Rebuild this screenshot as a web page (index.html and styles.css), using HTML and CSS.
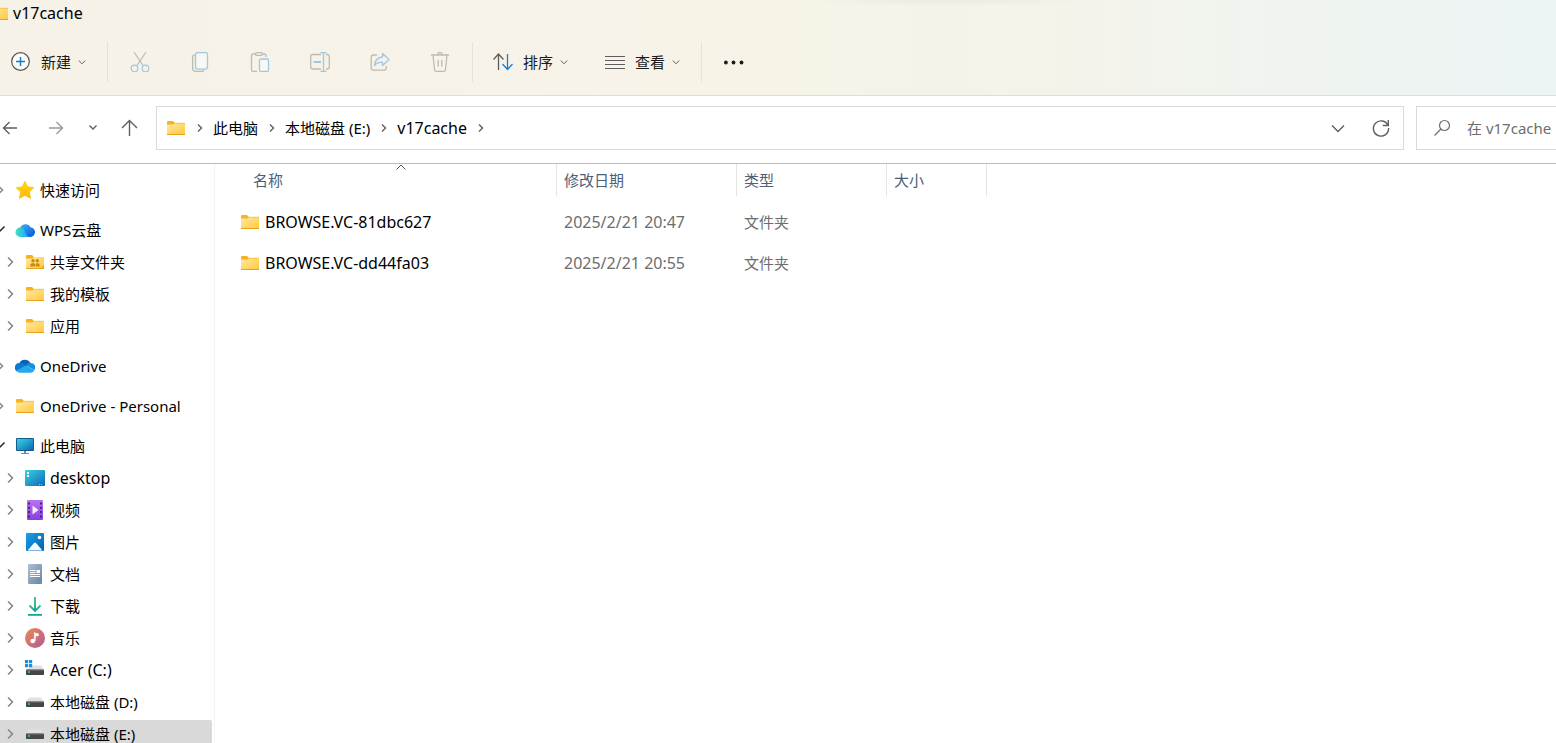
FILE: index.html
```html
<!DOCTYPE html>
<html lang="zh-CN">

<head>
    <meta charset="UTF-8">
    <meta name="viewport" content="width=device-width, initial-scale=1.0">
    <title>v17cache</title>
    <link rel="stylesheet" href="styles.css">
</head>

<body>
    <!-- Icon sprite -->
    <svg class="sprite" width="0" height="0" aria-hidden="true">
        <defs>
            <linearGradient id="g-folder" x1="0" y1="0" x2="1" y2="1">
                <stop offset="0" stop-color="#ffeaa6" />
                <stop offset="1" stop-color="#ffc93c" />
            </linearGradient>
            <linearGradient id="g-star" x1="0" y1="0" x2="0" y2="1">
                <stop offset="0" stop-color="#ffd800" />
                <stop offset="1" stop-color="#ffb812" />
            </linearGradient>
            <linearGradient id="g-wps-a" x1="0" y1="0" x2="1" y2="1">
                <stop offset="0" stop-color="#3ab8fb" />
                <stop offset="1" stop-color="#0a4fd8" />
            </linearGradient>
            <linearGradient id="g-wps-b" x1="0" y1="0" x2="1" y2="0">
                <stop offset="0" stop-color="#41e3c0" />
                <stop offset="1" stop-color="#14a6f6" />
            </linearGradient>
            <linearGradient id="g-screen" x1="0" y1="0" x2="1" y2="1">
                <stop offset="0" stop-color="#37d5dd" />
                <stop offset="1" stop-color="#0c67b8" />
            </linearGradient>
            <linearGradient id="g-video" x1="0" y1="0" x2="0" y2="1">
                <stop offset="0" stop-color="#b673f2" />
                <stop offset="1" stop-color="#8a3fdc" />
            </linearGradient>
            <linearGradient id="g-picture" x1="0" y1="0" x2="1" y2="1">
                <stop offset="0" stop-color="#1aa0e8" />
                <stop offset="1" stop-color="#0560b0" />
            </linearGradient>
            <linearGradient id="g-doc" x1="0" y1="0" x2="1" y2="1">
                <stop offset="0" stop-color="#adc0d4" />
                <stop offset="1" stop-color="#6784a3" />
            </linearGradient>
            <linearGradient id="g-download" x1="0" y1="0" x2="0" y2="1">
                <stop offset="0" stop-color="#2cc285" />
                <stop offset="1" stop-color="#0f9f9b" />
            </linearGradient>
            <linearGradient id="g-music" x1="0" y1="0" x2="1" y2="1">
                <stop offset="0" stop-color="#f08a4c" />
                <stop offset="1" stop-color="#b0589f" />
            </linearGradient>
        </defs>

        <symbol id="i-folder" viewBox="0 0 20 20">
            <path d="M1 4a1 1 0 0 1 1-1h5l2 2v4H1z" fill="#f9b21b" />
            <path d="M1 6.500h6.500L9 5h10v11.500H1z" fill="url(#g-folder)" />
            <path d="M1 16.500h18" stroke="#e9a41c" />
            <path d="M9 5.300h10" stroke="#f5bd35" stroke-width=".8" />
        </symbol>
        <symbol id="i-shared" viewBox="0 0 20 20">
            <path d="M1 4a1 1 0 0 1 1-1h5l2 2v4H1z" fill="#f9b21b" />
            <path d="M1 6.500h6.500L9 5h10v11.500H1z" fill="url(#g-folder)" />
            <path d="M1 16.500h18" stroke="#e9a41c" />
            <path d="M19 13v4h-4z" fill="#e9a41c" />
            <g fill="#c98a14">
                <circle cx="8" cy="8.700" r="1.700" />
                <circle cx="12.300" cy="8.700" r="1.700" />
                <path d="M5.300 14.500v-1.500q0-1.800 1.800-1.800h1.800q1.300 0 1.300 1.300v2z" />
                <path d="M10.800 14.500v-2q0-1.300 1.300-1.300h.8q1.800 0 1.800 1.800v1.500z" />
            </g>
        </symbol>
        <symbol id="i-star" viewBox="0 0 20 20">
            <path d="M10 1.300l2.700 5.600 6.100.8-4.500 4.300 1.200 6.200L10 15.200l-5.500 3 1.200-6.200-4.500-4.300 6.100-.8z" fill="url(#g-star)" stroke="url(#g-star)" stroke-width="1" stroke-linejoin="round" />
        </symbol>
        <symbol id="i-wps" viewBox="0 0 20 20">
            <path d="M5 8.500a5.600 5.600 0 0 1 10.500-1.200 4.800 4.800 0 0 1-.7 9.700H9z" fill="url(#g-wps-a)" />
            <path d="M5.200 7.500a4.700 4.700 0 0 1 4.300 3.200c1 2.600 1.700 4.800 4.500 6.300H5.200a4.700 4.700 0 0 1 0-9.500z" fill="url(#g-wps-b)" />
        </symbol>
        <symbol id="i-onedrive" viewBox="0 0 20 20">
            <path d="M4 8a6.200 6.200 0 0 1 11.500-.7L10 12z" fill="#0364b8" />
            <path d="M4.800 7Q8 6.500 10.500 9L14 12 2 15.500A4.600 4.600 0 0 1 4.800 7z" fill="#0f78d4" />
            <path d="M10.800 9.500q1.800-2.800 4.800-2.400A4.400 4.400 0 0 1 19.500 14z" fill="#1490df" />
            <path d="M1.500 14.500l9.300-5 8.700 4.500q-.9 2.700-3.800 2.700H5q-2.200 0-3.500-2.200z" fill="#28a8ea" />
        </symbol>
        <symbol id="i-pc" viewBox="0 0 20 20">
            <rect x="1" y="2" width="18" height="13" rx="1" fill="#155a8c" />
            <rect x="2" y="3" width="16" height="11" fill="url(#g-screen)" />
            <path d="M9 15h2v2h3v1H6v-1h3z" fill="#7b8894" />
        </symbol>
        <symbol id="i-desktop" viewBox="0 0 20 20">
            <rect y="2" width="20" height="16" rx="1" fill="url(#g-screen)" />
            <path d="M2 4h2v2H2zM2 7h2v2H2z" fill="#fff" />
            <path d="M14 16.500h4" stroke="#8ecbef" stroke-dasharray="1 1" />
        </symbol>
        <symbol id="i-video" viewBox="0 0 20 20">
            <rect x="2" width="16" height="20" rx="1" fill="url(#g-video)" />
            <path d="M4 2.500v16M16 2.500v16" stroke="#4c2385" stroke-width="2" stroke-dasharray="2 2.300" />
            <path d="M7.500 5.500v9l6-4.500z" fill="#f4ecfc" />
        </symbol>
        <symbol id="i-picture" viewBox="0 0 20 20">
            <rect x="1" y="1" width="18" height="18" rx="1" fill="url(#g-picture)" />
            <path d="M2.500 18.500l6.500-7.500q1-1 2 0l6.500 7.500z" fill="#f4fafd" />
            <circle cx="14.500" cy="5.500" r="1.800" fill="#fff" />
        </symbol>
        <symbol id="i-doc" viewBox="0 0 20 20">
            <rect x="3" width="14" height="20" rx="1" fill="url(#g-doc)" />
            <path d="M5 6.500h5.500M5 8.500h5.500M5 10.500h10M5 12.500h10" stroke="#fff" />
            <path d="M11.500 6h3.500v3h-3.500z" fill="#fff" />
        </symbol>
        <symbol id="i-download" viewBox="0 0 20 20">
            <path d="M4.500 9.500l5.500 5.500 5.500-5.500" fill="none" stroke="url(#g-download)" stroke-width="1.800" />
            <path d="M9.100 1h1.800v13H9.100z" fill="url(#g-download)" />
            <path d="M3 18h14v1.800H3z" fill="#14aa90" />
        </symbol>
        <symbol id="i-music" viewBox="0 0 20 20">
            <circle cx="10" cy="10" r="10" fill="url(#g-music)" />
            <ellipse cx="7.700" cy="13" rx="2.400" ry="2.200" fill="#fff" />
            <path d="M9.300 13V4.500q1.800 1.200 4 1.200v2.300q-1.500 0-2.600-.6l-.6 5.600z" fill="#fff" stroke="#fff" stroke-width=".6" />
        </symbol>
        <symbol id="i-drive" viewBox="0 0 20 20">
            <path d="M4 5.500h12l3 4.500H1z" fill="#dfe1e5" />
            <rect x="1" y="9.500" width="18" height="5.500" rx=".8" fill="#464646" />
            <path d="M1.500 10.200h17" stroke="#6a6a6a" />
            <circle cx="4" cy="12" r=".9" fill="#4be35e" />
        </symbol>
        <symbol id="i-drive-win" viewBox="0 0 20 20">
            <path d="M8 5.500h8l3 4H1z" fill="#dfe1e5" />
            <rect x="1" y="9.500" width="18" height="5.500" rx=".8" fill="#464646" />
            <path d="M1.500 10.200h17" stroke="#6a6a6a" />
            <circle cx="4" cy="12" r=".9" fill="#4be35e" />
            <path d="M0 0h3.200v3.200H0zM4 0h3.200v3.200H4zM0 4h3.200v3.200H0zM4 4h3.200v3.200H4z" fill="#1a8fe0" />
        </symbol>

        <symbol id="i-right" viewBox="0 0 20 20">
            <path d="M8 5.500l4.500 4.500L8 14.500" fill="none" stroke="currentColor" stroke-width="1.500" />
        </symbol>
        <symbol id="i-crumb" viewBox="0 0 20 20">
            <path d="M8.500 6.500L12 10l-3.500 3.500" fill="none" stroke="currentColor" stroke-width="1.500" />
        </symbol>
        <symbol id="i-open" viewBox="0 0 20 20">
            <path d="M5.500 9.500l3 3 6-6" fill="none" stroke="currentColor" stroke-width="1.500" />
        </symbol>
        <symbol id="i-down" viewBox="0 0 8 8">
            <path d="M.7 2.500L4 5.800l3.300-3.300" fill="none" stroke="currentColor" />
        </symbol>
    </svg>

    <header class="top">
        <div class="title-bar">
            <svg class="icon title-icon"><use href="#i-folder" /></svg>
            <span class="latin">v17cache</span>
        </div>

        <div class="toolbar">
            <button class="tool tool-new">
                <svg class="icon" viewBox="0 0 20 20" fill="none">
                    <circle cx="9.500" cy="9.500" r="8.800" fill="#fbfbf8" stroke="#555" stroke-width="1.200" />
                    <path d="M9.500 5v9M5 9.500h9" stroke="#1079d0" stroke-width="1.400" />
                </svg>
                新建
                <svg class="arrow"><use href="#i-down" /></svg>
            </button>
            <span class="sep"></span>

            <button class="tool-icon" aria-label="剪切">
                <svg class="icon" viewBox="0 0 20 20" fill="none" stroke-width="1.200">
                    <path d="M4 0l9 13.500M16 0L7 13.500" stroke="#bfbbb0" />
                    <circle cx="4.500" cy="16.500" r="3.300" stroke="#9cc8e6" />
                    <circle cx="15.500" cy="16.500" r="3.300" stroke="#9cc8e6" />
                </svg>
            </button>
            <button class="tool-icon" aria-label="复制">
                <svg class="icon" viewBox="0 0 20 20" fill="none" stroke-width="1.300">
                    <path d="M4.500 3Q2.600 3.300 2.600 5v11q0 3.400 3.400 3.400h5.500q2 0 2.500-1.400" stroke="#bfbbb0" />
                    <rect x="5.500" y=".6" width="12" height="16.500" rx="2" fill="#f9f7f1" stroke="#9cc8e6" />
                </svg>
            </button>
            <button class="tool-icon" aria-label="粘贴">
                <svg class="icon" viewBox="0 0 20 20" fill="none" stroke-width="1.300">
                    <path d="M5.500 2H3Q1.500 2 1.500 3.500V18q0 1.400 1.500 1.400h4M12.500 2h2Q16 2 16 3.500V5" stroke="#bfbbb0" />
                    <rect x="5.500" y=".6" width="7" height="2.800" rx="1.400" stroke="#bfbbb0" />
                    <rect x="9.500" y="7" width="9" height="12.400" rx="1.500" fill="#f9f7f1" stroke="#9cc8e6" />
                </svg>
            </button>
            <button class="tool-icon" aria-label="重命名">
                <svg class="icon" viewBox="0 0 20 20" fill="none" stroke-width="1.300">
                    <path d="M11 2.500H3Q.7 2.500.7 4.800v10Q.7 17 3 17h8M16 2.500h1q2.300 0 2.300 2.300v10Q19.300 17 17 17h-1" stroke="#bfbbb0" />
                    <path d="M10.500.6h6M13.500.6v18.800M10.500 19.400h6" stroke="#9cc8e6" />
                    <path d="M3.500 10h7.500" stroke="#9cc8e6" stroke-width="2" />
                </svg>
            </button>
            <button class="tool-icon" aria-label="共享">
                <svg class="icon" viewBox="0 0 20 20" fill="none" stroke-width="1.300" stroke-linejoin="round">
                    <path d="M7 3H3.500Q1.200 3 1.200 5.300v10.500q0 2.300 2.300 2.300H14q2.300 0 2.300-2.300V14" stroke="#bfbbb0" />
                    <path d="M12.500 1.500L19 7.500l-6.500 6v-3.300Q7.500 10 4.500 13.500 5.500 5.500 12.500 5z" stroke="#9cc8e6" />
                </svg>
            </button>
            <button class="tool-icon" aria-label="删除">
                <svg class="icon" viewBox="0 0 20 20" fill="none" stroke="#bfbbb0" stroke-width="1.300">
                    <path d="M1 3h18M3 3l1.500 14.500q.2 1.900 2 1.900h7q1.800 0 2-1.900L17 3M7.500 3Q7.500.6 10 .6T12.500 3M8.200 8v6.500M11.800 8v6.500" />
                </svg>
            </button>
            <span class="sep"></span>

            <button class="tool">
                <svg class="icon" viewBox="0 0 20 20" fill="none" stroke-width="1.300">
                    <path d="M5.500 18V2.500M.5 7.500l5-5.500 5 5.500" stroke="#5c5c5c" />
                    <path d="M14.500 2v15.500M9.500 12l5 5.500 5-5.500" stroke="#1580d6" />
                </svg>
                排序
                <svg class="arrow"><use href="#i-down" /></svg>
            </button>
            <button class="tool">
                <svg class="icon" viewBox="0 0 20 20" fill="none" stroke="#5c5c5c" stroke-width="1.200">
                    <path d="M0 4.500h20M0 8.500h20M0 12.500h20M0 16.500h20" />
                </svg>
                查看
                <svg class="arrow"><use href="#i-down" /></svg>
            </button>
            <span class="sep"></span>

            <button class="tool-icon" aria-label="查看更多">
                <svg class="icon" viewBox="0 0 20 20" fill="#1b1b1b">
                    <circle cx="1.900" cy="10.500" r="1.900" />
                    <circle cx="9.500" cy="10.500" r="1.900" />
                    <circle cx="17.500" cy="10.500" r="1.900" />
                </svg>
            </button>
        </div>
    </header>

    <div class="nav-bar">
        <button class="nav-btn nav-back" aria-label="后退">
            <svg class="icon" viewBox="0 0 20 20"><path d="M17 10H3.500M9.500 4L3.500 10l6 6" /></svg>
        </button>
        <button class="nav-btn nav-forward" aria-label="前进">
            <svg class="icon" viewBox="0 0 20 20"><path d="M3 10h13.500M10.500 4l6 6-6 6" /></svg>
        </button>
        <button class="nav-btn nav-recent" aria-label="最近位置">
            <svg class="icon" viewBox="0 0 20 20"><path d="M6.500 7.500L10 11l3.500-3.500" /></svg>
        </button>
        <button class="nav-btn" aria-label="上移">
            <svg class="icon" viewBox="0 0 20 20"><path d="M10.500 18V3M3 10l7.500-7.500L18 10" /></svg>
        </button>

        <nav class="address">
            <svg class="icon"><use href="#i-folder" /></svg>
            <svg class="crumb-arrow"><use href="#i-crumb" /></svg>
            <a href="#">此电脑</a>
            <svg class="crumb-arrow"><use href="#i-crumb" /></svg>
            <a href="#">本地磁盘 (E:)</a>
            <svg class="crumb-arrow"><use href="#i-crumb" /></svg>
            <a class="latin" href="#">v17cache</a>
            <svg class="crumb-arrow"><use href="#i-crumb" /></svg>
            <span class="grow"></span>
            <button class="address-btn" aria-label="历史记录">
                <svg class="icon" viewBox="0 0 20 20"><path d="M4 7.500l6 6 6-6" /></svg>
            </button>
            <button class="address-btn" aria-label="刷新">
                <svg class="icon" viewBox="0 0 20 20"><path d="M17 7.500A7.600 7.600 0 1 0 17.600 10M17.300 2v5.500h-5.500" /></svg>
            </button>
        </nav>

        <label class="search">
            <svg class="icon" viewBox="0 0 20 20" fill="none" stroke="#707070" stroke-width="1.200">
                <circle cx="12.500" cy="7.500" r="5" />
                <path d="M9 11l-6.500 6.500" />
            </svg>
            <input type="text" placeholder="在 v17cache" aria-label="搜索">
        </label>
    </div>

    <main class="content">
        <aside class="sidebar">
            <ul class="tree">
                <li><a class="node" href="#"><svg class="icon"><use href="#i-right" /></svg><svg class="icon"><use href="#i-star" /></svg>快速访问</a></li>
                <li>
                    <a class="node open" href="#"><svg class="icon"><use href="#i-open" /></svg><svg class="icon"><use href="#i-wps" /></svg>WPS云盘</a>
                    <ul>
                        <li><a class="node" href="#"><svg class="icon"><use href="#i-right" /></svg><svg class="icon"><use href="#i-shared" /></svg>共享文件夹</a></li>
                        <li><a class="node" href="#"><svg class="icon"><use href="#i-right" /></svg><svg class="icon"><use href="#i-folder" /></svg>我的模板</a></li>
                        <li><a class="node" href="#"><svg class="icon"><use href="#i-right" /></svg><svg class="icon"><use href="#i-folder" /></svg>应用</a></li>
                    </ul>
                </li>
                <li><a class="node" href="#"><svg class="icon"><use href="#i-right" /></svg><svg class="icon"><use href="#i-onedrive" /></svg>OneDrive</a></li>
                <li><a class="node" href="#"><svg class="icon"><use href="#i-right" /></svg><svg class="icon"><use href="#i-folder" /></svg>OneDrive - Personal</a></li>
                <li>
                    <a class="node open" href="#"><svg class="icon"><use href="#i-open" /></svg><svg class="icon"><use href="#i-pc" /></svg>此电脑</a>
                    <ul>
                        <li><a class="node latin" href="#"><svg class="icon"><use href="#i-right" /></svg><svg class="icon"><use href="#i-desktop" /></svg>desktop</a></li>
                        <li><a class="node" href="#"><svg class="icon"><use href="#i-right" /></svg><svg class="icon"><use href="#i-video" /></svg>视频</a></li>
                        <li><a class="node" href="#"><svg class="icon"><use href="#i-right" /></svg><svg class="icon"><use href="#i-picture" /></svg>图片</a></li>
                        <li><a class="node" href="#"><svg class="icon"><use href="#i-right" /></svg><svg class="icon"><use href="#i-doc" /></svg>文档</a></li>
                        <li><a class="node" href="#"><svg class="icon"><use href="#i-right" /></svg><svg class="icon"><use href="#i-download" /></svg>下载</a></li>
                        <li><a class="node" href="#"><svg class="icon"><use href="#i-right" /></svg><svg class="icon"><use href="#i-music" /></svg>音乐</a></li>
                        <li><a class="node latin" href="#"><svg class="icon"><use href="#i-right" /></svg><svg class="icon"><use href="#i-drive-win" /></svg>Acer (C:)</a></li>
                        <li><a class="node" href="#"><svg class="icon"><use href="#i-right" /></svg><svg class="icon"><use href="#i-drive" /></svg>本地磁盘 (D:)</a></li>
                        <li><a class="node selected" href="#"><svg class="icon"><use href="#i-right" /></svg><svg class="icon"><use href="#i-drive" /></svg>本地磁盘 (E:)</a></li>
                    </ul>
                </li>
            </ul>
        </aside>

        <section class="files">
            <table>
                <colgroup>
                    <col class="col-name">
                    <col class="col-date">
                    <col class="col-type">
                    <col class="col-size">
                </colgroup>
                <thead>
                    <tr>
                        <th>
                            <button class="sort-btn sorted">名称
                                <svg class="sort-mark" viewBox="0 0 10 6"><path d="M.5 5.500L5 1l4.500 4.500" /></svg>
                            </button>
                        </th>
                        <th><button class="sort-btn">修改日期</button></th>
                        <th><button class="sort-btn">类型</button></th>
                        <th><button class="sort-btn">大小</button></th>
                    </tr>
                </thead>
                <tbody>
                    <tr>
                        <td class="name latin"><svg class="icon"><use href="#i-folder" /></svg>BROWSE.VC-81dbc627</td>
                        <td class="latin">2025/2/21 20:47</td>
                        <td>文件夹</td>
                        <td></td>
                    </tr>
                    <tr>
                        <td class="name latin"><svg class="icon"><use href="#i-folder" /></svg>BROWSE.VC-dd44fa03</td>
                        <td class="latin">2025/2/21 20:55</td>
                        <td>文件夹</td>
                        <td></td>
                    </tr>
                </tbody>
            </table>
        </section>
    </main>
</body>

</html>
```
FILE: styles.css
```css
* {
    box-sizing: border-box;
}

body {
    margin: 0;
    height: 100vh;
    display: flex;
    flex-direction: column;
    overflow: hidden;
    background-color: #fff;
    color: #000;
    font-family: "Noto Sans", "Noto Sans CJK SC", sans-serif;
    font-size: 15px;
    line-height: 20px;
}

button,
input {
    font: inherit;
    color: inherit;
    padding: 0;
    border: none;
    background: none;
}

a {
    color: inherit;
    text-decoration: none;
}

ul {
    list-style: none;
    margin: 0;
    padding: 0;
}

.sprite {
    position: absolute;
}

.icon {
    width: 20px;
    height: 20px;
    flex: none;
}

.latin {
    font-size: 16px;
}

.grow {
    flex: 1;
}

/* title bar + toolbar */
.top {
    flex: none;
    border-bottom: 1px solid #dfddd3;
    background:
        radial-gradient(150px 6px at 61% 0, rgba(0, 0, 0, 0.04), transparent),
        linear-gradient(to right, #f7f2e7 0%, #f6f3e7 52%, #f4f3eb 70%, #eff4f0 85%, #edf4f5 100%);
}

.title-bar {
    display: flex;
    align-items: center;
    gap: 4px;
    height: 26px;
}

.title-icon {
    margin-left: -11px;
}

.toolbar {
    display: flex;
    align-items: center;
    height: 69px;
    padding: 2px 0 0 1px;
    color: #1b1b1b;
}

.tool {
    display: flex;
    align-items: center;
    height: 40px;
    padding: 0 19px 0 18px;
    gap: 10px;
}

.tool-new {
    padding-left: 10px;
}

.tool-icon {
    display: flex;
    align-items: center;
    justify-content: center;
    width: 60px;
    height: 40px;
}

.arrow {
    width: 8px;
    height: 8px;
    margin-left: -3px;
    color: #666;
}

.sep {
    width: 1px;
    height: 40px;
    margin: 0 2px;
    background-color: #e6e2d8;
}

/* navigation row */
.nav-bar {
    flex: none;
    display: flex;
    align-items: center;
    height: 68px;
    padding-bottom: 4px;
    gap: 17px;
    border-bottom: 1px solid #bdbdbd;
}

.nav-btn {
    display: flex;
    justify-content: center;
    width: 20px;
}

.nav-btn path,
.address-btn path {
    fill: none;
    stroke: #5f5f5f;
    stroke-width: 1.4;
}

.nav-back {
    margin-right: 9px;
}

.nav-forward path {
    stroke: #999;
}

.nav-recent {
    width: 19px;
}

.address {
    flex: 1;
    display: flex;
    align-items: center;
    height: 44px;
    padding: 0 1px 0 9px;
    border: 1px solid #d9d9d9;
}

.crumb-arrow {
    width: 27px;
    height: 20px;
    color: #666;
}

.address-btn {
    display: flex;
    justify-content: center;
    width: 43px;
}

.search {
    display: flex;
    align-items: center;
    gap: 15px;
    width: 140px;
    height: 44px;
    margin-left: -5px;
    padding-left: 15px;
    border: 1px solid #d9d9d9;
    border-right: none;
}

.search input {
    flex: 1;
    min-width: 0;
    outline: none;
}

.search input::placeholder {
    color: #6d6d6d;
}

/* folder tree */
.content {
    flex: 1;
    min-height: 0;
    display: flex;
}

.sidebar {
    flex: none;
    width: 215px;
    padding: 12px 2px 0 0;
    border-right: 1px solid #f3f3f3;
    overflow: hidden;
}

.tree {
    display: flex;
    flex-direction: column;
    gap: 12px;
}

.tree ul {
    display: flex;
    flex-direction: column;
    gap: 4px;
    padding-top: 4px;
}

.node {
    display: flex;
    align-items: center;
    gap: 5px;
    height: 28px;
    color: #000;
}

.node .icon:first-child {
    color: #858585;
}

.tree > li > .node {
    margin-left: -10px;
}

.node.open .icon:first-child {
    color: #222;
}

.node.selected {
    background-color: #d9d9d9;
    border-radius: 0 2px 2px 0;
}

/* file list */
.files {
    flex: 1;
    min-width: 0;
}

table {
    width: 772px;
    table-layout: fixed;
    border-collapse: separate;
    border-spacing: 0;
}

.col-name {
    width: 342px;
}

.col-date {
    width: 180px;
}

.col-type {
    width: 150px;
}

.col-size {
    width: 100px;
}

th {
    height: 32px;
    padding: 0;
    border-right: 1px solid #e5e5e5;
    text-align: left;
    font-weight: normal;
}

.sort-btn {
    display: block;
    width: 100%;
    height: 32px;
    padding-left: 7px;
    text-align: left;
    color: #4c607a;
}

.sort-btn.sorted {
    position: relative;
    width: 310px;
    margin-left: 31px;
}

.sort-mark {
    position: absolute;
    top: 0;
    left: 50%;
    width: 10px;
    height: 6px;
    margin-left: -5px;
    fill: none;
    stroke: #555;
}

tbody::before {
    content: "";
    display: table-row;
    height: 5px;
}

td {
    height: 41px;
    padding: 0 0 0 7px;
    color: #6d6d6d;
}

td.name {
    padding-left: 25px;
    color: #000;
}

td.name .icon {
    margin-right: 5px;
    vertical-align: -4px;
}
```
